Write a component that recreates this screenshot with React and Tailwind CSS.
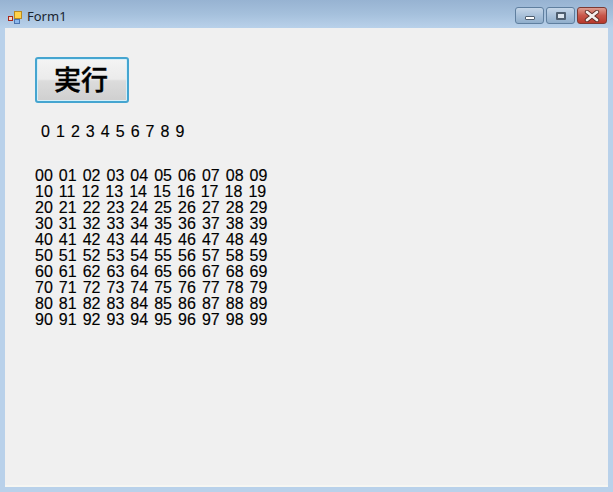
const rows = Array.from({ length: 10 }, (_, i) =>
  Array.from({ length: 10 }, (_, j) => `${i}${j}`).join(' ')
)

function FormIcon() {
  return (
    <svg width="14" height="13" viewBox="0 0 14 13" className="ml-[8px] mr-[5px] shrink-0">
      <rect x="0.5" y="5.5" width="4" height="4" fill="#f6d9c8" stroke="#a8281c" />
      <rect x="6.5" y="0.5" width="7" height="7" fill="#ffd24a" stroke="#b98a22" />
      <rect x="6.5" y="8.5" width="5" height="4" fill="#8db8ec" stroke="#4a74b0" />
    </svg>
  )
}

function CaptionButton({ className, children }) {
  return (
    <div className={`h-[17px] flex items-center justify-center rounded-[3px] border border-[#5f7f9f] ${className}`}>
      {children}
    </div>
  )
}

function App() {
  return (
    <div className="w-[613px] h-[492px] flex flex-col overflow-hidden bg-[#b9d1ea] font-['Liberation_Sans',sans-serif]">
      <div className="h-[28px] shrink-0 flex items-center pt-[6px] bg-gradient-to-b from-[#97b3d2] via-[#a5c0dc] to-[#b9d1ea]">
        <FormIcon />
        <span className="text-[13px] leading-none text-[#1a2430] font-['Noto_Sans',sans-serif] pb-px">Form1</span>
        <div className="ml-auto mr-[6px] flex gap-[2px] -mt-[3px]">
          <CaptionButton className="w-[29px] bg-gradient-to-b from-[#c5d6e8] via-[#a9c1da] to-[#90aecb]">
            <div className="w-[10px] h-[4px] mt-[5px] bg-white border border-[#4f5f70] rounded-[1px]" />
          </CaptionButton>
          <CaptionButton className="w-[29px] bg-gradient-to-b from-[#c5d6e8] via-[#a9c1da] to-[#90aecb]">
            <div className="w-[10px] h-[8px] bg-[#dde6ef] border-2 border-[#4f5f70] rounded-[1px]" />
          </CaptionButton>
          <CaptionButton className="w-[30px] border-[#7c3a33] bg-gradient-to-b from-[#dd9c90] via-[#c8574a] to-[#b8382c]">
            <svg width="16" height="12" viewBox="0 0 16 12">
              <path d="M3 2 L13 10 M13 2 L3 10" stroke="#5a2a24" strokeWidth="4.4" strokeLinecap="round" />
              <path d="M3 2 L13 10 M13 2 L3 10" stroke="#f4f0ee" strokeWidth="2.8" strokeLinecap="round" />
            </svg>
          </CaptionButton>
        </div>
      </div>

      <div className="flex-1 mx-[5px] mb-[5px] bg-[#f0f0f0] border-b-2 border-[#f6f6f2] pt-[29px] pl-[30px] text-black">
        <button className="w-[94px] h-[46px] flex items-center justify-center pb-[3px] pr-[2px] rounded-[3px] border-2 border-[#45a5d0] shadow-[inset_0_0_0_1px_#d4f0fa] bg-[linear-gradient(#f4f4f4_0%,#ebebeb_48%,#dcdcdc_52%,#cfcfcf_100%)] text-[27px] leading-none font-medium [-webkit-text-stroke:0.4px_black] font-['Noto_Sans_CJK_JP',sans-serif]">
          実行
        </button>
        <div className="mt-[21px] ml-[6px] text-[16px] leading-[16px] [word-spacing:1.6px] [-webkit-text-stroke:0.15px_black] whitespace-pre">0 1 2 3 4 5 6 7 8 9</div>
        <div className="mt-[28px] text-[16px] leading-[16px] [word-spacing:1.6px] [-webkit-text-stroke:0.15px_black] whitespace-pre">
          {rows.map((row) => (
            <div key={row}>{row}</div>
          ))}
        </div>
      </div>
    </div>
  )
}

export default App
